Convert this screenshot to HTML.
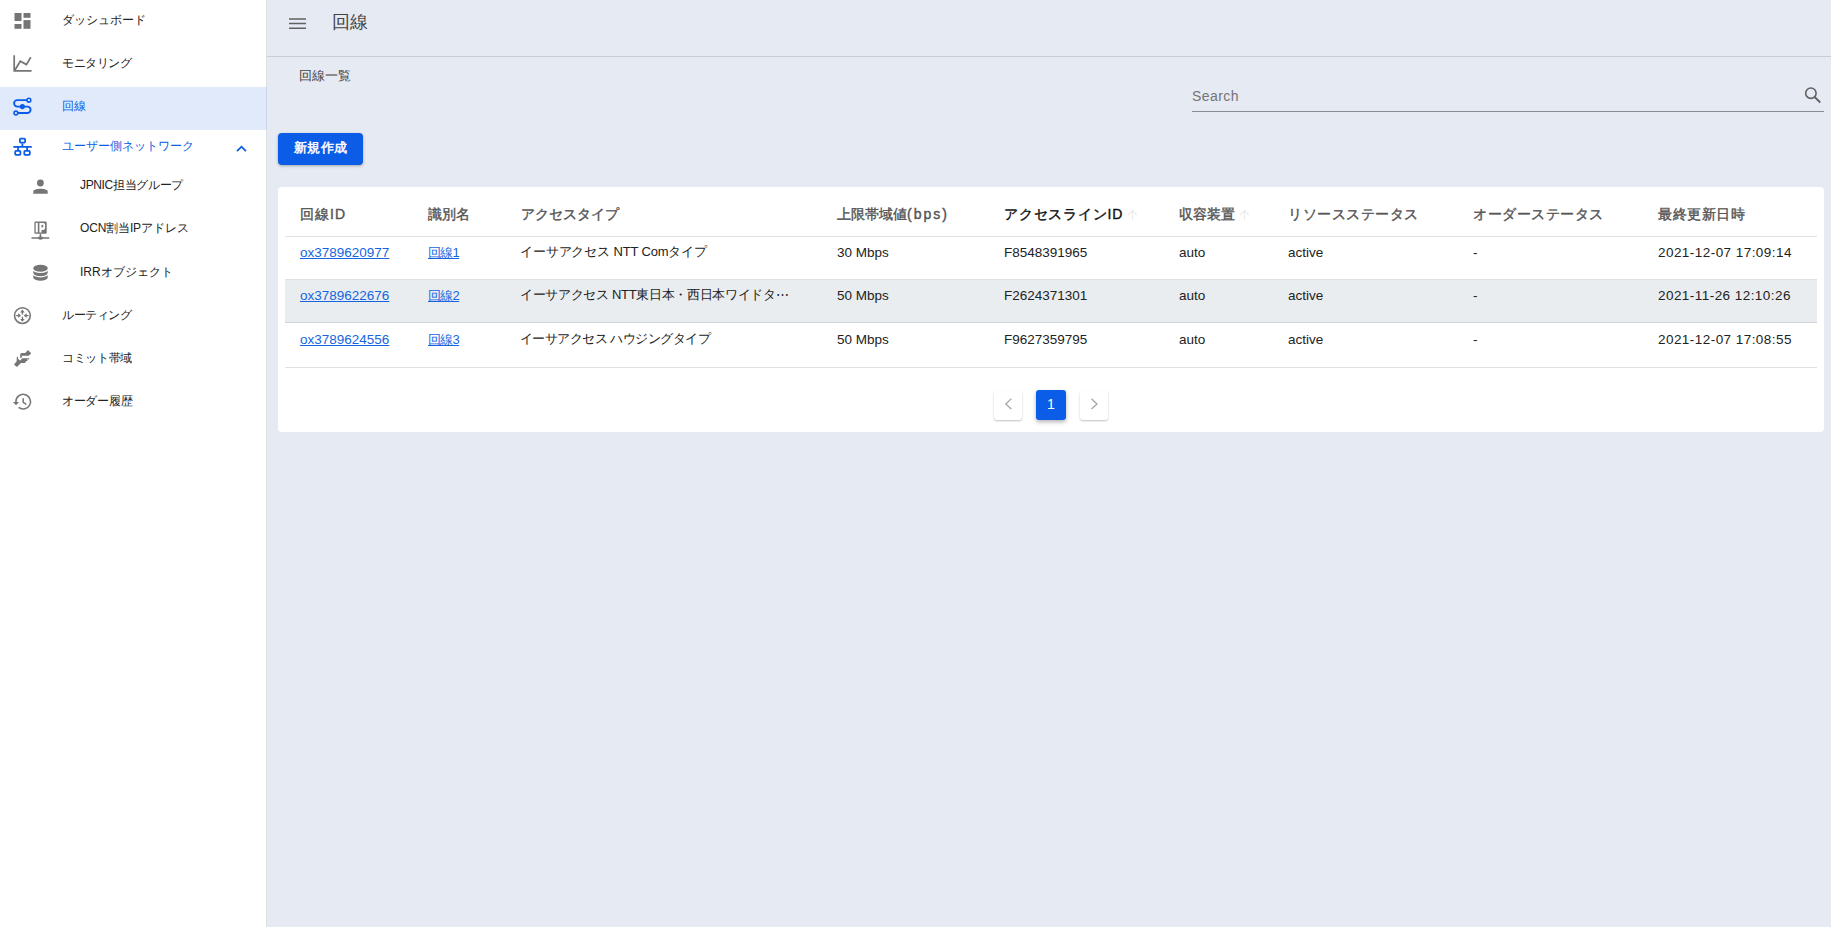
<!DOCTYPE html>
<html lang="ja">
<head>
<meta charset="utf-8">
<style>
*{box-sizing:border-box;margin:0;padding:0}
html,body{width:1831px;height:927px;overflow:hidden}
body{position:relative;background:#e6eaf3;font-family:"Liberation Sans",sans-serif;color:#222}
.a{position:absolute;white-space:nowrap;line-height:18px}
#side{position:absolute;left:0;top:0;width:267px;height:927px;background:#fff;border-right:1px solid #e0e0e0}
.sel{position:absolute;left:0;top:87px;width:266px;height:43px;background:#e1eafb}
.nav{font-size:12px;color:#222}
.blue{color:#0b5ce6}
#topline{position:absolute;left:267px;top:56px;width:1564px;height:1px;background:#c9cdd6}
.title{font-size:18px;color:#444;line-height:24px}
.crumb{font-size:13px;color:#444}
.btn{position:absolute;left:278px;top:133px;width:85px;height:32px;background:#0b5ce6;border-radius:4px;box-shadow:0 1px 3px rgba(0,0,0,.3);color:#fff;font-size:13px;font-weight:normal;-webkit-text-stroke:0.5px #fff;text-align:center;line-height:29px;letter-spacing:0.4px;text-indent:0.4px}
.search{font-size:14px;color:#757575;letter-spacing:0.45px}
#sline{position:absolute;left:1192px;top:111px;width:632px;height:1px;background:#8a8d94}
#card{position:absolute;left:278px;top:187px;width:1546px;height:245px;background:#fff;border-radius:4px}
.hl{position:absolute;left:285px;width:1532px;height:1px;background:#e0e0e0}
.row2{position:absolute;left:285px;top:280px;width:1532px;height:42px;background:#e9edf0}
.th{font-size:14px;font-weight:normal;color:#555;-webkit-text-stroke:0.4px}
.td{font-size:13.5px;color:#222}
.cj{font-size:13px}
.sf{letter-spacing:2px}
.lk{color:#1565e0;text-decoration:underline}
.pg{position:absolute;width:28px;height:29px;background:#fff;border-radius:3px;box-shadow:0 1px 2px rgba(0,0,0,.25)}
.pga{position:absolute;left:1036px;top:390px;width:30px;height:30px;background:#0b5ce6;border-radius:3px;box-shadow:0 2px 4px rgba(0,0,0,.3);color:#fff;font-size:14px;text-align:center;line-height:28px}
</style>
</head>
<body>
<div id="side"></div>
<div class="sel"></div>
<div style="position:absolute;left:266px;top:87px;width:1px;height:43px;background:#ccd6e6"></div>

<!-- sidebar text -->
<div class="a nav" style="left:62px;top:11px">ダッシュボード</div>
<div class="a nav" style="left:62px;top:54px;letter-spacing:-0.5px">モニタリング</div>
<div class="a nav blue" style="left:62px;top:97px">回線</div>
<div class="a nav blue" style="left:62px;top:137px">ユーザー側ネットワーク</div>
<div class="a nav" style="left:80px;top:176px;letter-spacing:-0.35px">JPNIC担当グループ</div>
<div class="a nav" style="left:80px;top:219px;letter-spacing:-0.15px">OCN割当IPアドレス</div>
<div class="a nav" style="left:80px;top:263px">IRRオブジェクト</div>
<div class="a nav" style="left:62px;top:306px;letter-spacing:-0.5px">ルーティング</div>
<div class="a nav" style="left:62px;top:349px;letter-spacing:-0.35px">コミット帯域</div>
<div class="a nav" style="left:62px;top:392px;letter-spacing:-0.3px">オーダー履歴</div>

<!-- sidebar icons -->
<svg style="position:absolute;left:0;top:0" width="266" height="420" viewBox="0 0 266 420">
  <g fill="#757575">
    <rect x="14.5" y="13" width="7" height="8"/>
    <rect x="23.5" y="13" width="7" height="4.8"/>
    <rect x="14.5" y="24" width="7" height="4.8"/>
    <rect x="23.5" y="20.1" width="7" height="8.7"/>
  </g>
  <g fill="none" stroke="#757575" stroke-width="1.7">
    <path d="M14.2 55.2V70.9H31.6"/>
    <path d="M14.8 70.2L20.3 61.2L26.4 64.6L30.8 57.3"/>
  </g>
  <g fill="none" stroke="#0b5ce6" stroke-width="1.9">
    <path d="M27 100.1H17.3A3.25 3.25 0 0 0 17.3 106.6H27.4A3.2 3.2 0 0 1 27.4 113H17.8"/>
    <circle cx="28.9" cy="100.2" r="1.9" stroke-width="1.55"/>
    <circle cx="15.9" cy="113" r="1.9" stroke-width="1.55"/>
  </g>
  <circle cx="22.4" cy="106.6" r="2.6" fill="#0b5ce6"/>
  <g fill="none" stroke="#0b5ce6" stroke-width="1.8">
    <rect x="19.9" y="138.6" width="5.2" height="4" rx="0.8"/>
    <rect x="15.2" y="150.9" width="5.2" height="4" rx="0.8"/>
    <rect x="24.3" y="150.9" width="5.5" height="4" rx="0.8"/>
    <path d="M22.4 143.5V146.9M13.3 146.9H31.8M18 146.9V150.9M27.1 146.9V150.9"/>
  </g>
  <path d="M237 151.2L241.5 146.7L245.9 151.2" fill="none" stroke="#0b5ce6" stroke-width="1.8"/>
  <g fill="#757575">
    <circle cx="40.4" cy="183" r="3.4"/>
    <path d="M33.3 193.7V191.6C33.3 189.6 37.5 188.8 40.5 188.8C43.5 188.8 47.7 189.6 47.7 191.6V193.7Z"/>
  </g>
  <g>
    <rect x="34.4" y="221.6" width="12.3" height="12.1" rx="1.2" fill="#757575"/>
    <rect x="35.7" y="222.9" width="2.1" height="9.5" fill="#fff"/>
    <path d="M39.4 222.9H43.2C44.5 222.9 45.1 223.8 45.1 225V227.8C45.1 229 44.5 229.9 43.2 229.9H41.5V232.4H39.4Z" fill="#fff"/>
    <rect x="41.5" y="224.9" width="1.7" height="2.4" fill="#757575"/>
    <path d="M40.4 233.7V237M31.5 238H49.3" stroke="#757575" stroke-width="1.5"/>
    <ellipse cx="40.5" cy="238" rx="2.5" ry="1.7" fill="#757575"/>
  </g>
  <g>
    <path d="M33.3 268V277.6A7.2 3.2 0 0 0 47.7 277.6V268Z" fill="#757575"/>
    <ellipse cx="40.5" cy="268" rx="7.2" ry="3.2" fill="#757575"/>
    <path d="M32.8 268.8A7.7 3.6 0 0 0 48.2 268.8M32.8 273.2A7.7 3.6 0 0 0 48.2 273.2" fill="none" stroke="#fff" stroke-width="1.3"/>
  </g>
  <g fill="none" stroke="#757575" stroke-width="1.6">
    <circle cx="22.4" cy="315.6" r="7.9"/>
  </g>
  <g fill="#757575">
    <path d="M20.1 312.4L22.4 309.5L24.7 312.4H23.1V314.5H21.7V312.4Z"/>
    <path d="M20.1 318.9L22.4 321.8L24.7 318.9H23.1V316.8H21.7V318.9Z"/>
    <path d="M18.2 313.3L21 315.6L18.2 317.9V316.3H16.2V314.9H18.2Z"/>
    <path d="M26.6 313.3L23.8 315.6L26.6 317.9V316.3H28.6V314.9H26.6Z"/>
  </g>
  <g fill="#757575">
    <path d="M21.5 353.1H25.2L28 350L31.2 353.3L28.8 355.7H21.9V357.2Q21.3 358.4 20.2 357.8V355Q20.2 353.1 21.5 353.1Z"/>
    <path d="M14 364.4L16.7 361.2V357.6Q17 356.3 17.7 356.6Q17.9 360.3 20.6 360.4L22 358.3H29.5L28.9 359.4H26.6L27.7 360.3L26.7 361.2H25.6L25.8 362.3L24.8 363.1H21L16.9 367Z"/>
  </g>
  <g fill="none" stroke="#757575" stroke-width="1.5">
    <path d="M15.9 402A7.3 7.3 0 1 1 18.6 407.3"/>
    <path d="M23.2 398.3V402.4L26.4 404.4"/>
  </g>
  <path d="M12.9 402H19.1L16 405.3Z" fill="#757575"/>
</svg>

<!-- top bar -->
<div id="topline"></div>
<svg style="position:absolute;left:285px;top:14px" width="26" height="20">
  <path d="M4 5.1H21M4 9.6H21M4 14.2H21" stroke="#616161" stroke-width="1.5"/>
</svg>
<div class="a title" style="left:332px;top:10px">回線</div>
<div class="a crumb" style="left:299px;top:66.5px">回線一覧</div>

<div class="a search" style="left:1192px;top:87px">Search</div>
<div id="sline"></div>
<svg style="position:absolute;left:1800px;top:84px" width="26" height="24">
  <circle cx="10.9" cy="9.2" r="5.2" fill="none" stroke="#616161" stroke-width="1.6"/>
  <path d="M14.6 13L20.3 18.5" stroke="#616161" stroke-width="1.8"/>
</svg>

<div class="btn">新規作成</div>

<!-- card / table -->
<div id="card"></div>
<div class="hl" style="top:236px"></div>
<div class="hl" style="top:279px"></div>
<div class="row2"></div>
<div class="hl" style="top:322px;background:#cfd3d8"></div>
<div class="hl" style="top:367px"></div>

<div class="a th" style="left:300px;top:205px;letter-spacing:1px">回線ID</div>
<div class="a th" style="left:428px;top:205px">識別名</div>
<div class="a th" style="left:521px;top:205px">アクセスタイプ</div>
<div class="a th" style="left:837px;top:205px">上限帯域値<span class="sf">(bps)</span></div>
<div class="a th" style="left:1004px;top:205px;color:#111;letter-spacing:0.8px">アクセスラインID</div>
<div class="a th" style="left:1179px;top:205px">収容装置</div>
<div class="a th" style="left:1288px;top:205px;letter-spacing:0.5px">リソースステータス</div>
<div class="a th" style="left:1473px;top:205px;letter-spacing:0.5px">オーダーステータス</div>
<div class="a th" style="left:1658px;top:205px;letter-spacing:0.5px">最終更新日時</div>
<svg style="position:absolute;left:1120px;top:205px" width="25" height="20"><path d="M12.5 5.6V14.7M8 10.1L12.5 5.6L17 10.1" fill="none" stroke="#eaeaea" stroke-width="1.1"/></svg>
<svg style="position:absolute;left:1232px;top:205px" width="25" height="20"><path d="M12.5 5.6V14.7M8 10.1L12.5 5.6L17 10.1" fill="none" stroke="#eaeaea" stroke-width="1.1"/></svg>

<!-- row 1 -->
<div class="a td lk" style="left:300px;top:244px">ox3789620977</div>
<div class="a td lk cj" style="left:428px;top:244px;letter-spacing:-0.7px">回線1</div>
<div class="a td cj" style="left:520px;top:243px;letter-spacing:-0.15px">イーサアクセス NTT Comタイプ</div>
<div class="a td" style="left:837px;top:244px">30 Mbps</div>
<div class="a td" style="left:1004px;top:244px">F8548391965</div>
<div class="a td" style="left:1179px;top:244px">auto</div>
<div class="a td" style="left:1288px;top:244px">active</div>
<div class="a td" style="left:1473px;top:244px">-</div>
<div class="a td" style="left:1658px;top:244px;letter-spacing:0.45px">2021-12-07 17:09:14</div>
<!-- row 2 -->
<div class="a td lk" style="left:300px;top:287px">ox3789622676</div>
<div class="a td lk cj" style="left:428px;top:287px;letter-spacing:-0.7px">回線2</div>
<div class="a td cj" style="left:520px;top:286px;letter-spacing:-0.33px">イーサアクセス NTT東日本・西日本ワイドタ⋯</div>
<div class="a td" style="left:837px;top:287px">50 Mbps</div>
<div class="a td" style="left:1004px;top:287px">F2624371301</div>
<div class="a td" style="left:1179px;top:287px">auto</div>
<div class="a td" style="left:1288px;top:287px">active</div>
<div class="a td" style="left:1473px;top:287px">-</div>
<div class="a td" style="left:1658px;top:287px;letter-spacing:0.45px">2021-11-26 12:10:26</div>
<!-- row 3 -->
<div class="a td lk" style="left:300px;top:331px">ox3789624556</div>
<div class="a td lk cj" style="left:428px;top:331px;letter-spacing:-0.7px">回線3</div>
<div class="a td cj" style="left:520px;top:330px;letter-spacing:-0.52px">イーサアクセス ハウジングタイプ</div>
<div class="a td" style="left:837px;top:331px">50 Mbps</div>
<div class="a td" style="left:1004px;top:331px">F9627359795</div>
<div class="a td" style="left:1179px;top:331px">auto</div>
<div class="a td" style="left:1288px;top:331px">active</div>
<div class="a td" style="left:1473px;top:331px">-</div>
<div class="a td" style="left:1658px;top:331px;letter-spacing:0.45px">2021-12-07 17:08:55</div>

<!-- pagination -->
<div class="pg" style="left:994px;top:391px"></div>
<div class="pga">1</div>
<div class="pg" style="left:1080px;top:391px"></div>
<svg style="position:absolute;left:994px;top:391px" width="28" height="29"><path d="M17.3 7.8L11.8 12.9L17.3 18" fill="none" stroke="#a6a6a6" stroke-width="1.3"/></svg>
<svg style="position:absolute;left:1080px;top:391px" width="28" height="29"><path d="M11.5 7.8L17 12.9L11.5 18" fill="none" stroke="#a6a6a6" stroke-width="1.3"/></svg>
</body>
</html>
